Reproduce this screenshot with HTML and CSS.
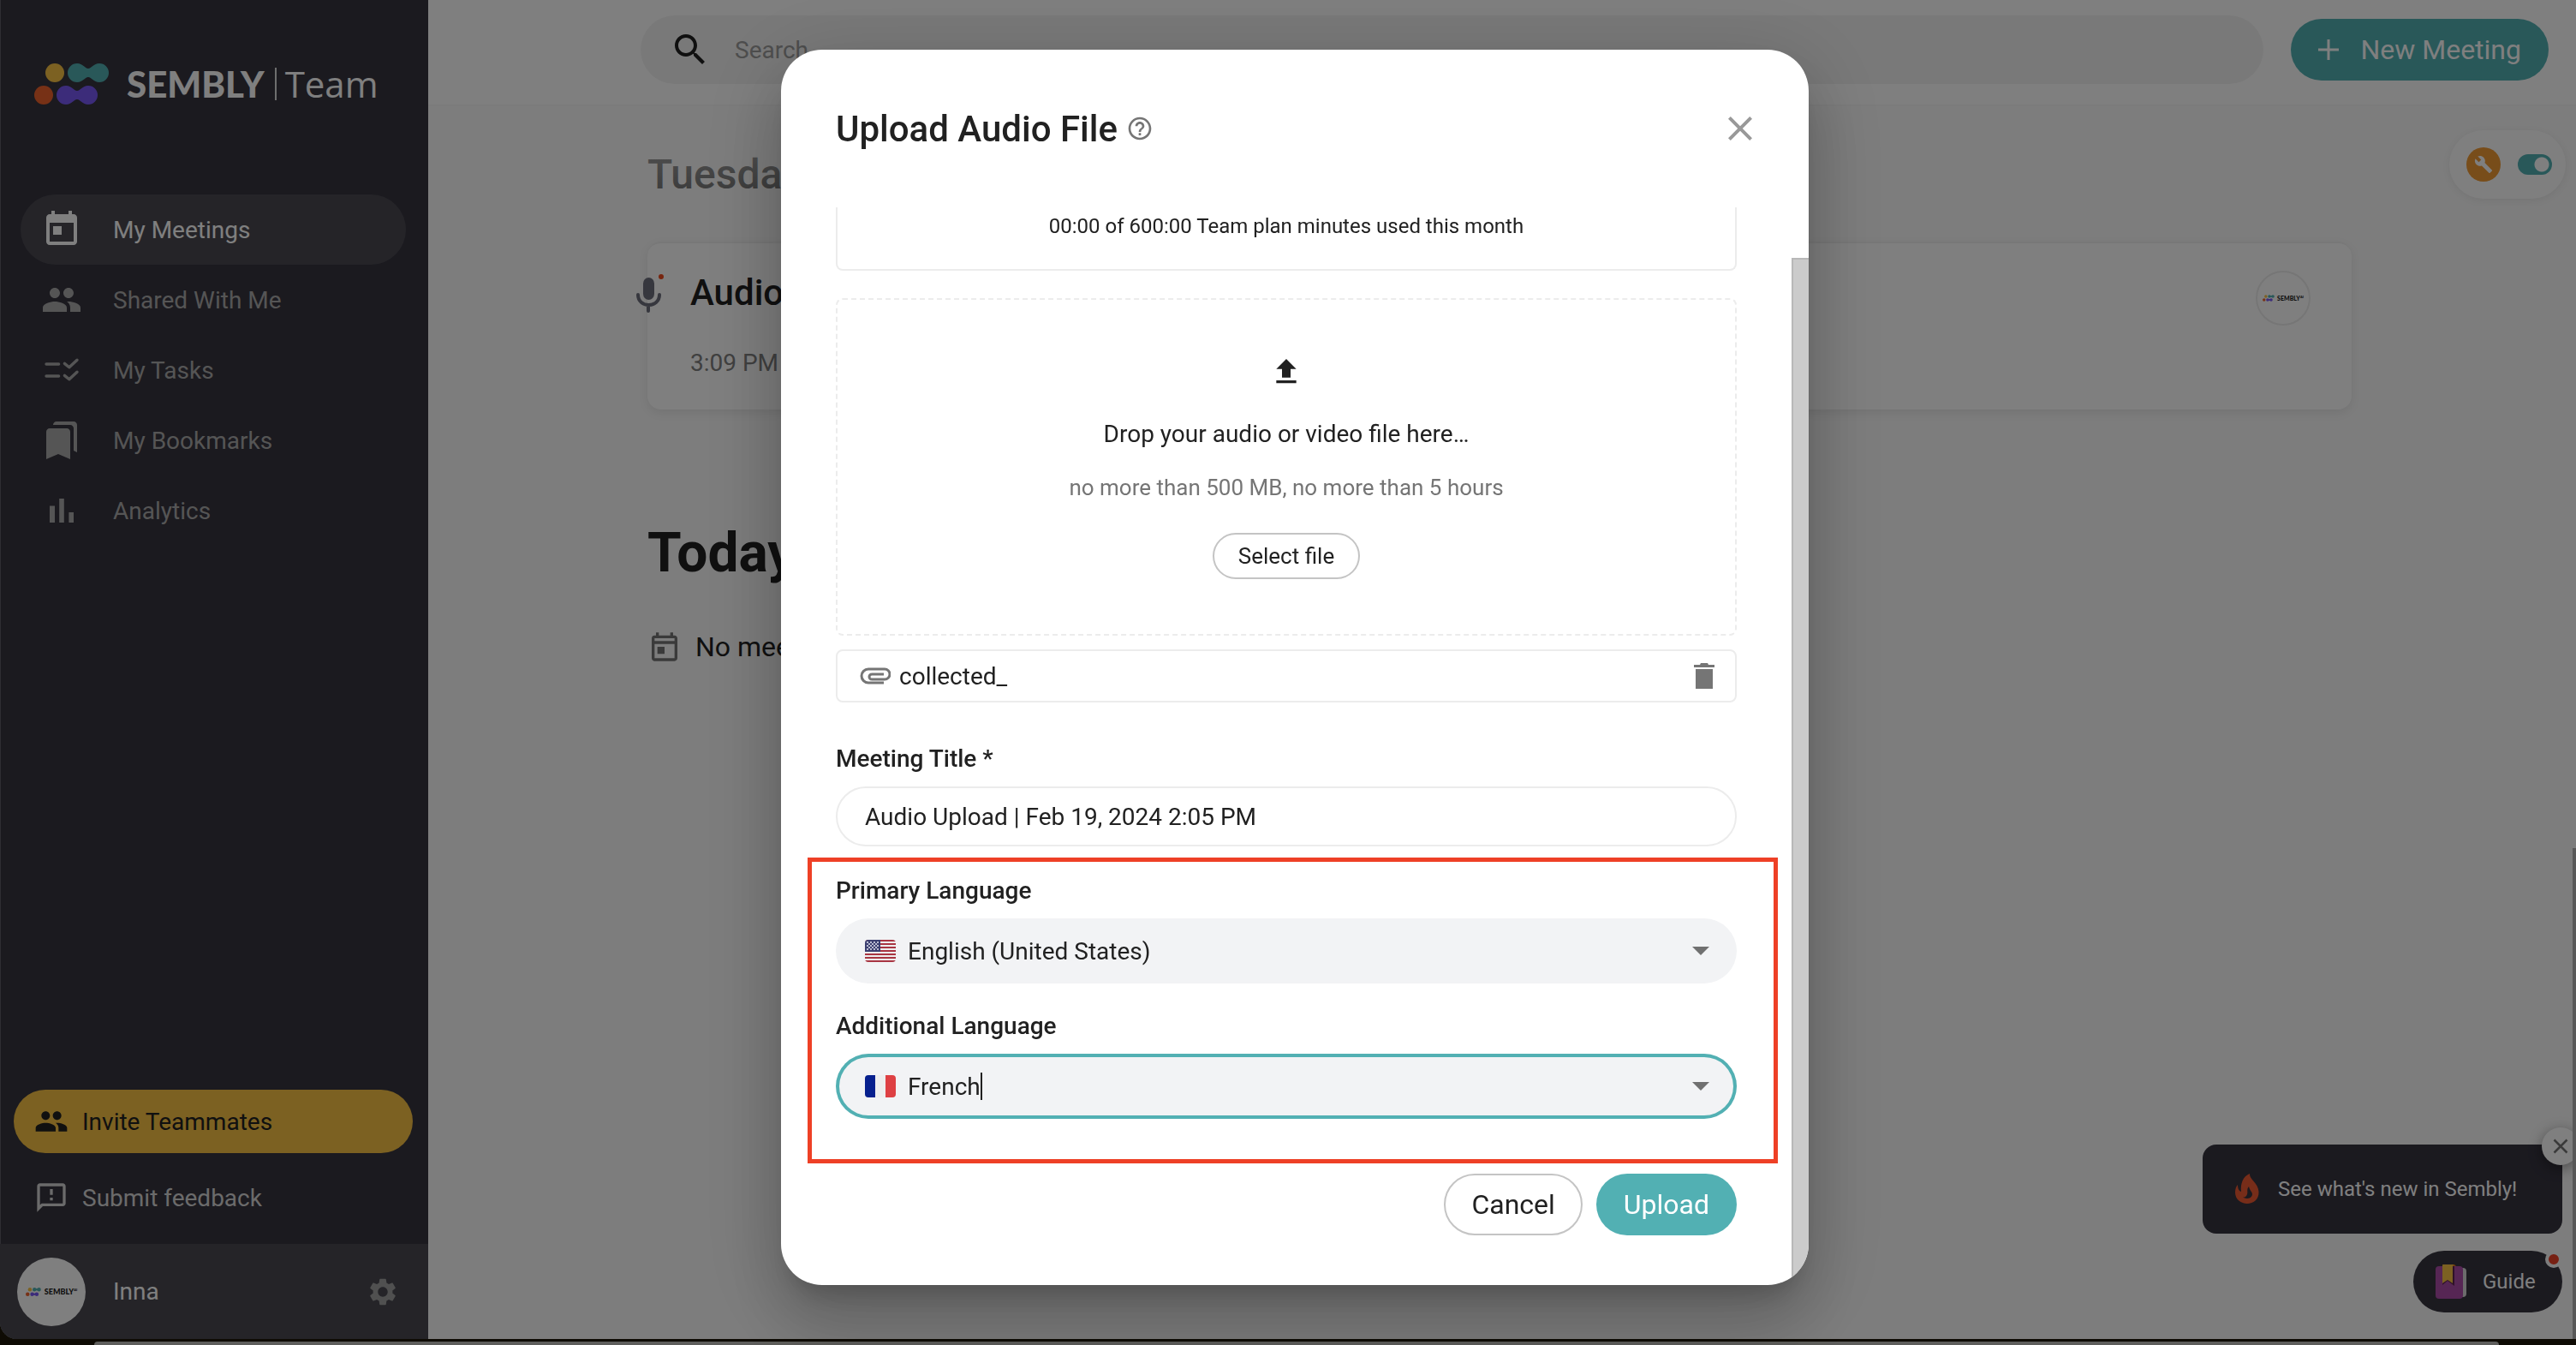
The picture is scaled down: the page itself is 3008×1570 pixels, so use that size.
FILE: index.html
```html
<!DOCTYPE html>
<html lang="en">
<head>
    <meta charset="UTF-8">
    <meta name="viewport" content="width=device-width, initial-scale=1.0">
    <title>Sembly - My Meetings</title>
    <link rel="stylesheet" href="styles.css">
</head>
<body>
    <!-- shared icons -->
    <svg class="sprite" aria-hidden="true">
        <symbol id="logo-dots" viewBox="0 0 88 48">
            <ellipse cx="24" cy="11" rx="11" ry="11" fill="#f8c244" />
            <path d="M50 0c7 0 9 6 13 6s6-6 13-6a11 11 0 0 1 0 22c-7 0-9-6-13-6s-6 6-13 6a11 11 0 0 1 0-22z" fill="#52b0b3" />
            <ellipse cx="11" cy="37" rx="11" ry="11" fill="#ee622c" />
            <path d="M37 26c7 0 9 6 13 6s6-6 13-6a11 11 0 0 1 0 22c-7 0-9-6-13-6s-6 6-13 6a11 11 0 0 1 0-22z" fill="#7859f4" />
        </symbol>
        <symbol id="icon-people" viewBox="0 0 24 24">
            <path d="M16 11c1.66 0 2.99-1.34 2.99-3S17.66 5 16 5s-3 1.34-3 3 1.34 3 3 3zm-8 0c1.66 0 2.99-1.34 2.99-3S9.66 5 8 5 5 6.34 5 8s1.34 3 3 3zm0 2c-2.33 0-7 1.17-7 3.500V19h14v-2.500c0-2.330-4.670-3.500-7-3.500zm8 0c-.29 0-.62.02-.97.05 1.160.84 1.970 1.970 1.970 3.450V19h6v-2.500c0-2.330-4.670-3.500-7-3.500z" />
        </symbol>
        <symbol id="icon-calendar" viewBox="0 0 24 24">
            <path d="M19 3h-1V1h-2v2H8V1H6v2H5c-1.110 0-1.990.9-1.990 2L3 19c0 1.100.89 2 2 2h14c1.100 0 2-.9 2-2V5c0-1.100-.9-2-2-2zm0 16H5V8h14v11zM7 10h5v5H7z" />
        </symbol>
    </svg>

    <div class="app">
        <aside class="sidebar">
            <div class="logo">
                <svg class="logo-mark"><use href="#logo-dots" /></svg>
                <span class="logo-name">SEMBLY</span>
                <span class="logo-plan">Team</span>
            </div>
            <nav class="nav">
                <a class="nav-item active" href="#">
                    <svg><use href="#icon-calendar" /></svg>
                    My Meetings
                </a>
                <a class="nav-item" href="#">
                    <svg><use href="#icon-people" /></svg>
                    Shared With Me
                </a>
                <a class="nav-item" href="#">
                    <svg viewBox="0 0 24 24"><path d="M3 8.500h7.300M3 15.500h7.300M13.700 8.200l2.700 2.200 4.600-4.300M13.700 15.200l2.700 2.200 4.600-4.300" fill="none" stroke="currentColor" stroke-width="1.700" stroke-linecap="round" stroke-linejoin="round" /></svg>
                    My Tasks
                </a>
                <a class="nav-item" href="#">
                    <svg viewBox="0 0 24 24"><path d="M19 18l2 1V3c0-1.100-.9-2-2-2H8.990C7.890 1 7 1.900 7 3h10c1.100 0 2 .9 2 2v13zM15 5H5c-1.100 0-2 .9-2 2v16l7-3 7 3V7c0-1.100-.9-2-2-2z" /></svg>
                    My Bookmarks
                </a>
                <a class="nav-item" href="#">
                    <svg viewBox="0 0 24 24"><path d="M5 9.200h3V19H5zM10.600 5h2.800v14h-2.800zm5.600 8H19v6h-2.800z" /></svg>
                    Analytics
                </a>
            </nav>
            <div class="sidebar-actions">
                <button class="invite">
                    <svg><use href="#icon-people" /></svg>
                    Invite Teammates
                </button>
                <a class="feedback" href="#">
                    <svg viewBox="0 0 24 24"><path d="M20 2H4c-1.100 0-1.990.9-1.990 2L2 22l4-4h14c1.100 0 2-.9 2-2V4c0-1.100-.9-2-2-2zm0 14H5.170L4 17.170V4h16v12zM11 12h2v2h-2zm0-6h2v4h-2z" /></svg>
                    Submit feedback
                </a>
            </div>
            <div class="user">
                <span class="avatar">
                    <svg><use href="#logo-dots" /></svg>
                    SEMBLY<sup>AI</sup>
                </span>
                <span class="user-name">Inna</span>
                <button class="icon-button settings" aria-label="Settings">
                    <svg viewBox="0 0 24 24"><path d="M19.140 12.940c.04-.3.060-.61.060-.94 0-.32-.02-.64-.07-.94l2.030-1.580c.18-.14.23-.41.12-.61l-1.920-3.320c-.12-.22-.37-.29-.59-.22l-2.390.96c-.5-.38-1.030-.7-1.620-.94l-.36-2.540c-.04-.24-.24-.41-.48-.41h-3.840c-.24 0-.43.17-.47.41l-.36 2.540c-.59.24-1.130.57-1.620.94l-2.390-.96c-.22-.08-.47 0-.59.22L2.740 8.870c-.12.21-.08.47.12.61l2.030 1.580c-.05.3-.09.63-.09.94s.02.64.07.94l-2.030 1.580c-.18.14-.23.41-.12.61l1.920 3.320c.12.22.37.29.59.22l2.390-.96c.5.38 1.030.7 1.620.94l.36 2.540c.05.24.24.41.48.41h3.840c.24 0 .44-.17.47-.41l.36-2.540c.59-.24 1.130-.56 1.620-.94l2.390.96c.22.08.47 0 .59-.22l1.920-3.320c.12-.22.070-.47-.12-.61l-2.010-1.580zM12 15.600c-1.980 0-3.600-1.620-3.600-3.600s1.620-3.600 3.600-3.600 3.600 1.620 3.600 3.600-1.620 3.600-3.600 3.600z" /></svg>
                </button>
            </div>
        </aside>

        <main class="main">
            <header class="topbar">
                <div class="search">
                    <svg viewBox="0 0 24 24"><path d="M15.500 14h-.79l-.28-.27C15.410 12.590 16 11.110 16 9.500 16 5.910 13.090 3 9.500 3S3 5.910 3 9.500 5.910 16 9.500 16c1.610 0 3.090-.59 4.230-1.570l.27.28v.79l5 4.990L20.490 19l-4.990-5zm-6 0C7.010 14 5 11.990 5 9.500S7.010 5 9.500 5 14 7.010 14 9.500 11.990 14 9.500 14z" /></svg>
                    <input type="text" placeholder="Search" aria-label="Search">
                </div>
                <button class="new-meeting">
                    <svg viewBox="0 0 24 24"><path d="M20 13h-7v7h-2v-7H4v-2h7V4h2v7h7v2z" /></svg>
                    New Meeting
                </button>
            </header>

            <div class="meetings">
                <h2 class="day past">Tuesday</h2>
                <article class="meeting">
                    <svg class="mic" viewBox="0 0 34 44"><rect x="9" y="4" width="13" height="26" rx="7" /><path d="M3 24c0 16 25 16 25 0M15 36v7" fill="none" stroke="#6d6e7c" stroke-width="4" stroke-linecap="round" /><circle cx="30" cy="3" r="3" fill="#ee4a1e" /></svg>
                    <div class="meeting-info">
                        <h3>Audio Upload</h3>
                        <p>3:09 PM</p>
                    </div>
                    <span class="avatar small">
                        <svg><use href="#logo-dots" /></svg>
                        SEMBLY<sup>AI</sup>
                    </span>
                </article>
                <h1 class="day">Today</h1>
                <p class="empty">
                    <svg viewBox="0 0 24 24"><path d="M19 4h-1V2h-2v2H8V2H6v2H5c-1.110 0-1.990.9-1.990 2L3 20c0 1.100.89 2 2 2h14c1.100 0 2-.9 2-2V6c0-1.100-.9-2-2-2zm0 16H5V10h14v10zM5 8V6h14v2zM7 12h5v5H7z" /></svg>
                    No meetings
                </p>
            </div>
        </main>

        <div class="dev-tools">
            <span class="wrench">
                <svg viewBox="0 0 24 24"><path d="M22.700 19l-9.100-9.100c.9-2.300.4-5-1.500-6.900-2-2-5-2.400-7.400-1.300L9 6 6 9 1.600 4.700C.4 7.100.9 10.100 2.900 12.100c1.900 1.900 4.600 2.400 6.900 1.500l9.100 9.100c.4.4 1 .4 1.400 0l2.300-2.300c.5-.4.5-1.100.1-1.400z" /></svg>
            </span>
            <input class="switch" type="checkbox" aria-label="Developer tools" checked>
        </div>

        <div class="promo">
            <svg viewBox="0 0 28 36"><path d="M17 0c-1 6 10 11 10.500 21C28 30 21 35 14 35S0 30 0 22c0-4 1-7 3-9 0 4 1 7 4 8C6 12 9 3 17 0zM14 29c4 0 6-3 6-5 0-3-3-4-4-9-3 3-1 6-2 9s-3 4-5 3c1 1 3 2 5 2z" /></svg>
            See what's new in Sembly!
            <button class="promo-close" aria-label="Close">
                <svg viewBox="0 0 24 24"><path d="M3 3l18 18M21 3L3 21" /></svg>
            </button>
        </div>

        <button class="guide">
            <svg viewBox="0 0 36 40"><rect x="24" y="4" width="12" height="34" rx="4" fill="#d8d8d8" /><rect y="2" width="32" height="38" rx="4" fill="#ac4da8" /><path d="M8 0h14l2 2H8z" fill="#e0761c" /><path d="M10 2h12v23l-8-6-6 5z" fill="#5c2350" /><path d="M8 1l1-1h12l-1 2v20l-6-4-6 4z" fill="#f8c244" /></svg>
            Guide
            <span class="dot"></span>
        </button>
        <div class="page-scroll"></div>
    </div>
    <div class="desktop"></div>

    <div class="overlay">
        <form class="modal" role="dialog" aria-labelledby="modal-title">
            <div class="modal-header">
                <h2 id="modal-title">Upload Audio File</h2>
                <svg class="help" viewBox="0 0 24 24"><path d="M11 18h2v-2h-2v2zm1-16C6.480 2 2 6.480 2 12s4.480 10 10 10 10-4.480 10-10S17.520 2 12 2zm0 18c-4.410 0-8-3.590-8-8s3.590-8 8-8 8 3.590 8 8-3.590 8-8 8zm0-14c-2.210 0-4 1.790-4 4h2c0-1.100.9-2 2-2s2 .9 2 2c0 2-3 1.750-3 5h2c0-2.250 3-2.500 3-5 0-2.210-1.790-4-4-4z" /></svg>
                <button type="button" class="icon-button close" aria-label="Close">
                    <svg viewBox="0 0 24 24"><path d="M19 6.410L17.590 5 12 10.590 6.410 5 5 6.410 10.590 12 5 17.590 6.410 19 12 13.410 17.590 19 19 17.590 13.410 12z" /></svg>
                </button>
            </div>

            <p class="usage">00:00 of 600:00 Team plan minutes used this month</p>

            <div class="dropzone">
                <svg viewBox="0 0 24 24"><path d="M5 20h14v-2H5v2zm0-10h4v6h6v-6h4l-7-7-7 7z" /></svg>
                <p>Drop your audio or video file here…</p>
                <p class="hint">no more than 500 MB, no more than 5 hours</p>
                <button type="button" class="select-file">Select file</button>
            </div>

            <div class="file">
                <svg class="clip" viewBox="0 0 36 20"><path d="M28 18H10a8 8 0 0 1 0-16h19a5 5 0 0 1 0 12H14a3 3 0 0 1 0-6h14" /></svg>
                <span>collected_</span>
                <button type="button" class="icon-button trash" aria-label="Remove file">
                    <svg viewBox="0 0 24 30"><path d="M2 7h20v23H2zM0 2h7l1-2h8l1 2h7v3H0z" /></svg>
                </button>
            </div>

            <label for="title">Meeting Title *</label>
            <input class="field title-field" id="title" type="text" value="Audio Upload | Feb 19, 2024 2:05 PM">

            <div class="languages">
                <label for="primary">Primary Language</label>
                <div class="field language">
                    <svg class="flag" viewBox="0 0 36 26">
                        <rect width="36" height="26" fill="#eee" />
                        <path d="M0 1h36M0 5h36M0 9h36M0 13h36M0 17h36M0 21h36M0 25h36" stroke="#a83542" stroke-width="2" />
                        <path d="M0 0h18v14H0z" fill="#3c3f70" />
                        <path d="M2 3h15M2 7h15M2 11h15" stroke="#b9bbd0" stroke-width="2" stroke-dasharray="2 2" />
                        <path d="M4 5h12M4 9h12" stroke="#b9bbd0" stroke-width="2" stroke-dasharray="2 2" />
                    </svg>
                    <select id="primary">
                        <option>English (United States)</option>
                    </select>
                </div>

                <label for="additional">Additional Language</label>
                <div class="field language focused">
                    <svg class="flag" viewBox="0 0 36 26">
                        <rect width="36" height="26" fill="#eee" />
                        <path d="M0 0h12v26H0z" fill="#07208e" />
                        <path d="M24 0h12v26H24z" fill="#de4043" />
                    </svg>
                    <input id="additional" type="text" role="combobox" aria-expanded="false" value="French">
                    <span class="caret"></span>
                </div>
            </div>

            <div class="modal-actions">
                <button type="button" class="cancel">Cancel</button>
                <button type="submit" class="upload">Upload</button>
            </div>
            <div class="modal-scroll"></div>
        </form>
    </div>
</body>
</html>
```

FILE: styles.css
```css
* {
    box-sizing: border-box;
    margin: 0;
    padding: 0;
}
body {
    font-family: Roboto, "Liberation Sans", sans-serif;
    font-size: 28px;
    color: #212121;
    background: #1c1608;
    height: 100vh;
    display: flex;
    flex-direction: column;
    overflow: hidden;
}
button, input, select {
    font: inherit;
    color: inherit;
    border: none;
    background: none;
    outline: none;
}
button {
    cursor: pointer;
}
a {
    color: inherit;
    text-decoration: none;
}
svg {
    fill: currentColor;
    flex: none;
}
.sprite {
    position: absolute;
    width: 0;
    height: 0;
}
.app {
    position: relative;
    flex: 1;
    display: flex;
    background: #fafafa;
    border-radius: 0 0 0 20px;
    overflow: hidden;
}
.desktop {
    height: 4px;
    margin: 3px 90px 0 110px;
    border-radius: 20px 20px 0 0;
    background: #bdbdb8;
}

/* sidebar */
.sidebar {
    width: 500px;
    display: flex;
    flex-direction: column;
    background: #36343f;
    color: #ababab;
    box-shadow: inset 1px 0 0 #5c5b64;
}
.logo {
    display: flex;
    align-items: center;
    height: 52px;
    margin: 72px 0 103px 40px;
    color: #fff;
    font-family: Lato, sans-serif;
    font-size: 42px;
}
.logo-mark {
    width: 88px;
    height: 48px;
    margin-right: 20px;
}
.logo-name {
    font-weight: 900;
}
.logo-plan {
    border-left: 2px solid #ddd;
    margin-left: 12px;
    padding-left: 10px;
    font-family: "Open Sans", sans-serif;
    font-weight: 500;
    line-height: 38px;
}
.nav {
    padding: 0 26px 0 24px;
}
.nav-item {
    display: flex;
    align-items: center;
    gap: 36px;
    height: 82px;
    padding-left: 24px;
    border-radius: 41px;
}
.nav-item svg {
    width: 48px;
    height: 48px;
}
.nav-item.active {
    background: #4a4951;
    color: #fff;
}
.sidebar-actions {
    margin-top: auto;
    padding: 0 18px 18px 16px;
}
.invite, .feedback {
    display: flex;
    align-items: center;
    gap: 16px;
    width: 100%;
    padding-left: 24px;
}
.invite {
    height: 74px;
    border-radius: 37px;
    background: #f8c244;
    color: #212121;
}
.feedback {
    height: 72px;
    margin-top: 16px;
    color: #d6d6d6;
}
.invite svg, .feedback svg {
    width: 40px;
    height: 40px;
}
.user {
    display: flex;
    align-items: center;
    height: 111px;
    padding: 0 34px 0 20px;
    background: #4a4951;
    color: #fff;
}
.avatar {
    display: flex;
    align-items: center;
    justify-content: center;
    width: 80px;
    height: 80px;
    border-radius: 50%;
    background: #fff;
    color: #222;
    font: 900 9px Lato, sans-serif;
}
.avatar svg {
    width: 18px;
    height: 10px;
    margin-right: 4px;
}
.avatar sup {
    font-size: 4px;
    margin-bottom: 4px;
}
.avatar.small {
    width: 64px;
    height: 64px;
    border: 2px solid #ececec;
    font-size: 7px;
}
.avatar.small svg {
    width: 14px;
    height: 8px;
    margin-right: 3px;
}
.user-name {
    margin-left: 32px;
    flex: 1;
}
.icon-button {
    display: flex;
    color: #757575;
}
.settings {
    color: #a0a0a0;
}
.settings svg {
    width: 38px;
    height: 38px;
}

/* main area */
.main {
    flex: 1;
    min-width: 0;
}
.topbar {
    position: relative;
    display: flex;
    align-items: flex-start;
    gap: 32px;
    height: 124px;
    padding: 18px 32px 0 248px;
    background: #fff;
    border-bottom: 2px solid #f2f2f2;
}
/* meetings fade out under the bar */
.topbar::after {
    content: "";
    position: absolute;
    top: 100%;
    left: 0;
    right: 0;
    height: 100px;
    background: linear-gradient(rgba(250, 250, 250, 0.6), rgba(250, 250, 250, 0));
    pointer-events: none;
}
.search {
    flex: 1;
    display: flex;
    align-items: center;
    height: 80px;
    padding-left: 34px;
    border-radius: 40px;
    background: #f3f3f3;
}
.search svg {
    width: 48px;
    height: 48px;
}
.search input {
    flex: 1;
    margin-left: 28px;
}
.search input::placeholder {
    color: #9c9c9c;
}
.new-meeting {
    display: flex;
    align-items: center;
    gap: 19px;
    height: 72px;
    margin-top: 4px;
    padding: 0 32px 0 26px;
    border-radius: 36px;
    background: #52b0b3;
    color: #fff;
    font-size: 32px;
}
.new-meeting svg {
    width: 36px;
    height: 36px;
}
.meetings {
    padding: 50px 262px 0 256px;
}
.day {
    font-size: 64px;
    line-height: 80px;
}
.day.past {
    font-size: 48px;
    line-height: 60px;
    font-weight: 500;
    color: #7a7a7a;
}
.meeting {
    position: relative;
    display: flex;
    align-items: flex-start;
    height: 196px;
    margin: 48px 0 128px;
    padding: 32px 48px 0 50px;
    background: #fff;
    border-top: 2px solid #f0f0f0;
    border-radius: 16px;
    box-shadow: 0 4px 12px rgba(0, 0, 0, 0.08);
}
.mic {
    position: absolute;
    left: -14px;
    top: 36px;
    width: 34px;
    height: 44px;
    color: #6d6e7c;
    overflow: visible;
}
.meeting-info {
    flex: 1;
}
.meeting h3 {
    font-size: 42px;
    font-weight: 500;
    line-height: 52px;
}
.meeting p {
    margin-top: 38px;
    line-height: 36px;
    color: #808080;
}
.empty {
    display: flex;
    align-items: center;
    gap: 16px;
    margin-top: 49px;
    font-size: 32px;
}
.empty svg {
    width: 40px;
    height: 40px;
    color: #757575;
}

/* floating widgets */
.dev-tools {
    position: absolute;
    top: 152px;
    right: 12px;
    display: flex;
    align-items: center;
    gap: 20px;
    height: 80px;
    padding: 0 16px 0 20px;
    border-radius: 40px;
    background: #fff;
    box-shadow: 0 2px 10px rgba(0, 0, 0, 0.07);
}
.wrench {
    display: flex;
    align-items: center;
    justify-content: center;
    width: 40px;
    height: 40px;
    border-radius: 50%;
    background: #f09a35;
    color: #fff;
}
.wrench svg {
    width: 22px;
    height: 22px;
}
.switch {
    appearance: none;
    width: 40px;
    height: 24px;
    border-radius: 12px;
    background: radial-gradient(circle at 28px 12px, #fff 8px, transparent 9px), #52b0b3;
}
.promo {
    position: absolute;
    right: 16px;
    bottom: 123px;
    display: flex;
    align-items: center;
    gap: 22px;
    height: 104px;
    width: 420px;
    padding-left: 38px;
    border-radius: 16px;
    background: #36343f;
    color: #fff;
    font-size: 24px;
}
.promo svg {
    width: 28px;
    height: 36px;
    color: #ee5a33;
}
.promo .promo-close {
    position: absolute;
    top: -20px;
    right: -20px;
    display: flex;
    align-items: center;
    justify-content: center;
    width: 44px;
    height: 44px;
    border-radius: 50%;
    background: #fff;
    box-shadow: 0 4px 16px rgba(0, 0, 0, 0.4);
}
.promo .promo-close svg {
    width: 20px;
    height: 20px;
    fill: none;
    stroke: #757575;
    stroke-width: 3;
}
.guide {
    position: absolute;
    right: 16px;
    bottom: 31px;
    display: flex;
    align-items: center;
    gap: 19px;
    height: 72px;
    width: 174px;
    padding-left: 26px;
    border-radius: 36px;
    background: #36343f;
    color: #fff;
    font-size: 24px;
}
.guide svg {
    width: 36px;
    height: 40px;
}
.dot {
    position: absolute;
    top: 0;
    right: 0;
    width: 20px;
    height: 20px;
    border: 4px solid #fafafa;
    border-radius: 50%;
    background: #ee4026;
}
.page-scroll {
    position: absolute;
    right: 0;
    bottom: 0;
    width: 4px;
    height: 573px;
    background: #b0b0b0;
}

/* upload dialog */
.overlay {
    position: fixed;
    inset: 0;
    display: flex;
    justify-content: center;
    align-items: center;
    padding: 0 0 12px 16px;
    background: rgba(0, 0, 0, 0.5);
}
.modal {
    position: relative;
    width: 1200px;
    max-width: 100%;
    padding: 66px 84px 58px 64px;
    border-radius: 48px;
    background: #fff;
    overflow: hidden;
    box-shadow: 0 22px 30px -14px rgba(0, 0, 0, 0.2), 0 48px 76px 6px rgba(0, 0, 0, 0.14), 0 18px 92px 16px rgba(0, 0, 0, 0.12);
}
.modal-header {
    display: flex;
    align-items: center;
    height: 52px;
    margin-bottom: 66px;
}
.modal-header h2 {
    font-size: 42px;
    font-weight: 500;
}
.help {
    width: 32px;
    height: 32px;
    margin-left: 10px;
    color: #757575;
}
.close {
    margin: 0 -28px 0 auto;
    color: #999;
}
.close svg {
    width: 48px;
    height: 48px;
}
.usage {
    padding: 6px 0 34px;
    border: 2px solid #ececec;
    border-top: none;
    border-radius: 0 0 8px 8px;
    font-size: 24px;
    line-height: 32px;
    text-align: center;
}
.dropzone {
    display: flex;
    flex-direction: column;
    align-items: center;
    margin: 32px 0 16px;
    padding: 64px 0;
    border: 2px dashed #ececec;
    border-radius: 8px;
    line-height: 36px;
}
.dropzone svg {
    width: 40px;
    height: 40px;
    margin-bottom: 35px;
}
.dropzone .hint {
    margin: 28px 0 37px;
    font-size: 26px;
    line-height: 32px;
    color: #757575;
}
.select-file {
    height: 54px;
    padding: 0 28px;
    border: 2px solid #c4c4c4;
    border-radius: 27px;
    font-size: 26px;
}
.file {
    display: flex;
    align-items: center;
    height: 62px;
    margin-bottom: 48px;
    padding: 0 24px 0 26px;
    border: 2px solid #ececec;
    border-radius: 8px;
}
.clip {
    width: 36px;
    height: 20px;
    margin-right: 10px;
    fill: none;
    stroke: #757575;
    stroke-width: 3;
}
.trash {
    margin-left: auto;
}
.trash svg {
    width: 24px;
    height: 30px;
}
label {
    display: block;
    margin-bottom: 14px;
    font-weight: 500;
    line-height: 36px;
}
.field {
    width: 100%;
    padding: 0 34px;
    border-radius: 38px;
}
.title-field {
    display: block;
    height: 70px;
    padding: 0 32px;
    border: 2px solid #ececec;
}
.languages {
    position: relative;
    margin: 34px 0 64px;
}
/* red highlight around the language fields */
.languages::after {
    content: "";
    position: absolute;
    inset: -21px -48px -52px -33px;
    border: 5px solid #ee4026;
    pointer-events: none;
}
.language {
    position: relative;
    display: flex;
    align-items: center;
    height: 76px;
    background: #f2f3f5;
}
.language + label {
    margin-top: 32px;
}
.language.focused {
    box-shadow: inset 0 0 0 4px #52b0b3;
}
.language::after {
    content: "";
    position: absolute;
    right: 32px;
    border: 10px solid transparent;
    border-top-color: #707070;
    border-bottom: none;
    pointer-events: none;
}
.flag {
    width: 36px;
    height: 26px;
    margin-right: 14px;
    border-radius: 4px;
}
.language select {
    flex: 1;
    appearance: none;
}
.language input {
    field-sizing: content;
}
.caret {
    width: 2px;
    height: 32px;
    background: #212121;
}
.modal-actions {
    display: flex;
    justify-content: flex-end;
    gap: 16px;
}
.modal-actions button {
    height: 72px;
    padding: 0 32px;
    border-radius: 36px;
    font-size: 32px;
}
.modal-actions .cancel {
    padding: 0 30px;
    border: 2px solid #c4c4c4;
}
.upload {
    background: #52b0b3;
    color: #fff;
}
.modal-scroll {
    position: absolute;
    top: 243px;
    right: 0;
    bottom: 0;
    width: 20px;
    background: #cbcbcb;
    border-left: 2px solid #b8b8b8;
    border-top: 2px solid #b8b8b8;
}
```
